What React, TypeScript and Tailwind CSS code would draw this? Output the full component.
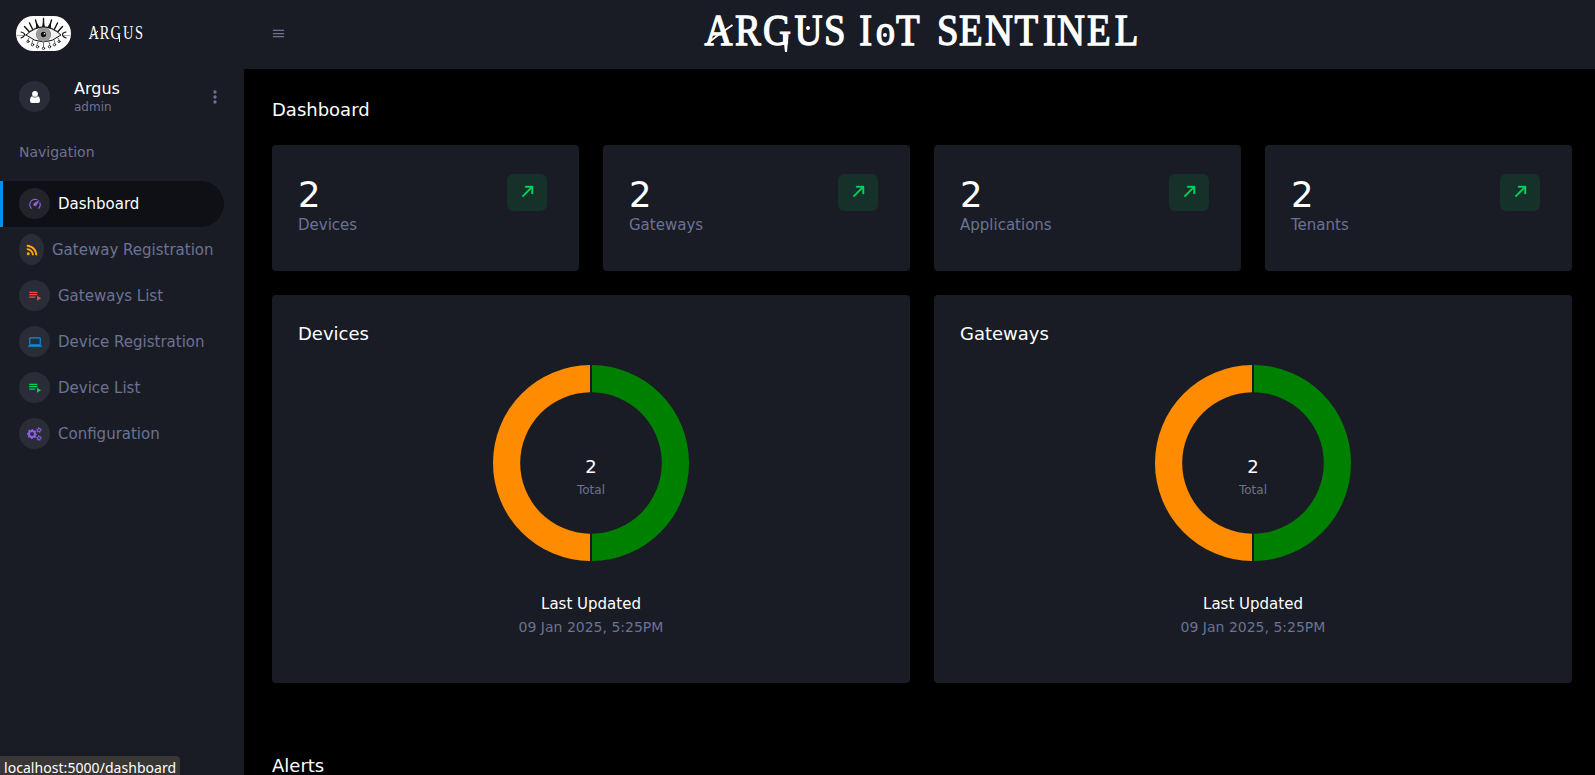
import React from "react";
import { FaRss } from "react-icons/fa";

const ICONS = {
  menu: "M3,6H21V8H3V6M3,11H21V13H3V11M3,16H21V18H3V16Z",
  dots: "M12,16A2,2 0 0,1 14,18A2,2 0 0,1 12,20A2,2 0 0,1 10,18A2,2 0 0,1 12,16M12,10A2,2 0 0,1 14,12A2,2 0 0,1 12,14A2,2 0 0,1 10,12A2,2 0 0,1 12,10M12,4A2,2 0 0,1 14,6A2,2 0 0,1 12,8A2,2 0 0,1 10,6A2,2 0 0,1 12,4Z",
  speedometer:
    "M12,16A3,3 0 0,1 9,13C9,11.88 9.61,10.9 10.5,10.39L20.21,4.77L14.68,14.35C14.18,15.33 13.17,16 12,16M12,3C13.81,3 15.5,3.5 16.97,4.32L14.87,5.53C14,5.19 13,5 12,5A8,8 0 0,0 4,13C4,15.21 4.89,17.21 6.34,18.65H6.35C6.74,19.04 6.74,19.67 6.35,20.06C5.96,20.45 5.32,20.45 4.93,20.07V20.07C3.12,18.26 2,15.76 2,13A10,10 0 0,1 12,3M22,13C22,15.76 20.88,18.26 19.07,20.07V20.07C18.68,20.45 18.05,20.45 17.66,20.06C17.27,19.67 17.27,19.04 17.66,18.65V18.65C19.11,17.2 20,15.21 20,13C20,12 19.81,11 19.46,10.1L20.67,8C21.5,9.5 22,11.18 22,13Z",
  playlist: "M16,8.500H2V10.700H16V8.500M16,4.500H2V6.700H16V4.500M2,15H12.500V12.800H2V15M15.500,11.500V20L22.500,15.700L15.500,11.500Z",
  laptop:
    "M4,6H20V16H4M20,18A2,2 0 0,0 22,16V6C22,4.89 21.1,4 20,4H4C2.89,4 2,4.89 2,6V16A2,2 0 0,0 4,18H0V20H24V18H20Z",
  arrow: "M5,17.59L15.59,7H9V5H19V15H17V8.41L6.41,19L5,17.59Z",
};

function Icon({ name, className }: { name: keyof typeof ICONS; className: string }) {
  return (
    <svg viewBox="0 0 24 24" fill="currentColor" className={className}>
      <path d={ICONS[name]} />
    </svg>
  );
}

function Cogs({ className }: { className: string }) {
  return (
    <svg viewBox="0 0 30 28" fill="none" stroke="currentColor" className={className}>
      <circle cx="10" cy="14" r="6" strokeWidth="4" />
      <circle cx="10" cy="14" r="8.800" strokeWidth="2.400" pathLength="16" strokeDasharray="1 1" strokeDashoffset=".5" />
      <circle cx="24" cy="6" r="3" strokeWidth="2" />
      <circle cx="24" cy="6" r="4.800" strokeWidth="2" pathLength="12" strokeDasharray="1 1" strokeDashoffset=".5" />
      <circle cx="24" cy="22" r="3" strokeWidth="2" />
      <circle cx="24" cy="22" r="4.800" strokeWidth="2" pathLength="12" strokeDasharray="1 1" strokeDashoffset=".5" />
    </svg>
  );
}

function EyeLogo() {
  return (
    <svg viewBox="0 0 55 35" className="h-[35px] w-[55px] shrink-0 rounded-full bg-white">
      <g stroke="#111" fill="none" strokeLinecap="round">
        <path d="M10 19Q27.500 3 45 19Q27.500 33 10 19Z" strokeWidth="1" fill="#f4f4f4" />
        <path d="M13 15.500Q27.500 5.500 42 15.500" strokeWidth=".6" />
        <path d="M1 19.500H7M48 19.500H54" strokeWidth=".7" stroke="#888" />
        <path d="M5 16Q9 17 8.500 19T5 22M50 16Q46 17 46.500 19T50 22" strokeWidth="1.1" />
        <path
          d="M27.500 2.500V10M19.500 4L21.500 11M35.500 4L33.500 11M13.500 7L16.500 13M41.500 7L38.500 13M8.500 10.500L13 15.500M46.500 10.500L42 15.500"
          strokeWidth="1.4"
        />
        <path
          d="M26.500 11L27.500 6L28.500 11ZM20.500 11.500L20.500 7L23 11ZM34.500 11.500L34.500 7L32 11Z"
          fill="#111"
          strokeWidth=".8"
        />
        <path
          d="M13 22L12 24M17 24L16 27M22 26L21 29M27.500 27V31M33 26L34 29M38 24L39 27M42 22L43 24"
          strokeWidth=".6"
        />
        <g strokeWidth=".8">
          <circle cx="12" cy="25.500" r="1.100" />
          <circle cx="16.500" cy="28.700" r="1.200" />
          <circle cx="21.500" cy="30.700" r="1.200" />
          <circle cx="27.500" cy="32.300" r="1.200" />
          <circle cx="33.500" cy="30.700" r="1.200" />
          <circle cx="38.500" cy="28.700" r="1.200" />
          <circle cx="43" cy="25.500" r="1.100" />
        </g>
      </g>
      <circle cx="27.500" cy="18.500" r="7" fill="#a5a5a5" stroke="#666" strokeWidth=".8" />
      <circle cx="27.500" cy="18.500" r="4.700" fill="none" stroke="#777" strokeWidth=".6" />
      <circle cx="27.500" cy="18.500" r="2.700" fill="#111" />
      <circle cx="28.500" cy="17.700" r=".8" fill="#fff" />
    </svg>
  );
}

function SmallWordmark() {
  return (
    <svg viewBox="0 0 58 24" className="h-6 w-[58px] text-white" fill="currentColor">
      <text
        transform="scale(.8 1)"
        x="1.800 16 29.400 45 60"
        y="17.500"
        className="font-['Liberation_Serif',serif] text-[18px]"
      >
        ARGUS
      </text>
      <path d="M2 17L11 9M32.500 13V20" fill="none" stroke="currentColor" strokeWidth="1" />
      <circle cx="41" cy="10.500" r=".7" />
    </svg>
  );
}

function Wordmark() {
  return (
    <svg viewBox="0 0 440 69" className="h-[69px] w-[440px] text-white" fill="currentColor">
      <text
        transform="scale(.86 1)"
        y="45"
        x="3 38.400 70.900 107.500 141.900 165 183 202 225.600 256 273.300 298.800 329 363.400 396.500 412.800 447.700 480"
        stroke="currentColor"
        strokeWidth="1.3"
        className="font-['Liberation_Serif',serif] text-[45px]"
      >
        {"ARGUS IoT SENTINEL"}
      </text>
      <path d="M4 44.500Q17 34 30.500 25" fill="none" stroke="currentColor" strokeWidth="1.8" />
      <path d="M81 35H86.500L85 52H83Z" />
      <circle cx="106" cy="28" r="2" />
      <circle cx="183" cy="35" r="2" />
    </svg>
  );
}

type NavItem = { label: string; icon: React.ReactNode; active?: boolean; narrow?: boolean };

const NAV: NavItem[] = [
  { label: "Dashboard", icon: <Icon name="speedometer" className="size-[14px] text-[#8f5fe8]" />, active: true },
  { label: "Gateway Registration", icon: <FaRss className="size-[12px] text-[#ffab00]" />, narrow: true },
  { label: "Gateways List", icon: <Icon name="playlist" className="size-[14px] text-[#fc424a]" /> },
  { label: "Device Registration", icon: <Icon name="laptop" className="size-[14px] text-[#0090e7]" /> },
  { label: "Device List", icon: <Icon name="playlist" className="size-[14px] text-[#00d25b]" /> },
  { label: "Configuration", icon: <Cogs className="h-[14px] w-[15px] text-[#8f5fe8]" /> },
];

function Sidebar() {
  return (
    <aside className="flex w-[244px] shrink-0 flex-col bg-[#191c24]">
      <div className="flex h-[67px] shrink-0 items-center pl-4">
        <EyeLogo />
        <div className="pl-4">
          <SmallWordmark />
        </div>
      </div>
      <div className="flex h-[59px] shrink-0 items-center pr-[19px] pl-[19px]">
        <div className="flex size-[31px] items-center justify-center rounded-full bg-[#2a2c37]">
          <svg viewBox="0 0 10 12" className="mt-px h-3 w-[10px]" fill="#fff">
            <circle cx="5" cy="2.900" r="2.900" />
            <path d="M2 5.200Q5 7.600 8 5.200Q10 6 10 9.700Q10 12 8 12H2Q0 12 0 9.700Q0 6 2 5.200Z" />
          </svg>
        </div>
        <div className="flex flex-1 flex-col pt-0.5 pl-6">
          <span className="text-base leading-[18px] text-white">Argus</span>
          <span className="text-xs leading-[18px]">admin</span>
        </div>
        <Icon name="dots" className="size-5" />
      </div>
      <div className="flex h-[55px] shrink-0 items-center pb-[3px] pl-[19px] text-sm">Navigation</div>
      <nav className="flex flex-col">
        {NAV.map((item) => (
          <a
            key={item.label}
            className={
              item.active
                ? "flex h-[46px] w-[224px] items-center gap-2 rounded-r-full border-l-[3px] border-[#0090e7] bg-[#0f1015] pl-4 text-[15px] whitespace-nowrap text-white"
                : "flex h-[46px] w-[224px] items-center gap-2 border-l-[3px] border-transparent pl-4 text-[15px] whitespace-nowrap"
            }
          >
            <span
              className={
                item.narrow
                  ? "mb-px flex h-[31px] w-[25px] shrink-0 items-center justify-center rounded-[50%] bg-[#2a2c37]"
                  : item.active
                    ? "mb-px flex size-[31px] shrink-0 items-center justify-center rounded-full bg-[#22232b]"
                    : "mb-px flex size-[31px] shrink-0 items-center justify-center rounded-full bg-[#2a2c37]"
              }
            >
              {item.icon}
            </span>
            {item.label}
          </a>
        ))}
      </nav>
    </aside>
  );
}

function StatCard({ value, label }: { value: number; label: string }) {
  return (
    <div className="flex h-[126px] items-start justify-between rounded bg-[#191c24] pt-[29px] pr-8 pl-[26px]">
      <div className="flex flex-col">
        <span className="pt-px text-[35.500px] leading-10 text-white">{value}</span>
        <span className="text-[15px] leading-5">{label}</span>
      </div>
      <div className="flex h-[37px] w-10 justify-center rounded-md bg-[#16302a] pt-2">
        <Icon name="arrow" className="size-[19px] stroke-[#00d25b] stroke-[0.5] text-[#00d25b]" />
      </div>
    </div>
  );
}

function DonutCard({ title, total }: { title: string; total: number }) {
  return (
    <div className="flex h-[388px] flex-col rounded bg-[#191c24] px-[26px] pt-[26px]">
      <h3 className="text-lg leading-[26px] text-white">{title}</h3>
      <svg viewBox="0 0 200 200" className="mt-4 size-[200px] self-center">
        <path d="M101 2.005A98 98 0 0 1 101 197.995V170.793A70.800 70.800 0 0 0 101 29.207Z" fill="#008000" />
        <path d="M99 2.005A98 98 0 0 0 99 197.995V170.793A70.800 70.800 0 0 1 99 29.207Z" fill="#ff8c00" />
        <text x="100" y="110" textAnchor="middle" fill="#fff" fontSize="18">
          {total}
        </text>
        <text x="100" y="131" textAnchor="middle" fill="#6c7293" fontSize="12">
          Total
        </text>
      </svg>
      <div className="mt-[29px] flex flex-col items-center">
        <span className="text-[15px] leading-6 text-white">Last Updated</span>
        <span className="text-sm leading-[23px]">09 Jan 2025, 5:25PM</span>
      </div>
    </div>
  );
}

export default function App() {
  return (
    <div className="relative flex h-[775px] w-[1595px] overflow-hidden bg-black font-['DejaVu_Sans',sans-serif] text-[#6c7293]">
      <Sidebar />
      <div className="flex min-w-0 flex-1 flex-col">
        <header className="flex h-[69px] shrink-0 items-center bg-[#191c24] pl-[27px]">
          <Icon name="menu" className="mb-0.5 size-[15px]" />
          <div className="ml-[416px]">
            <Wordmark />
          </div>
        </header>
        <main className="flex flex-col pr-[23px] pl-7">
          <h3 className="flex h-[76px] items-center pt-1.5 text-lg text-white">Dashboard</h3>
          <div className="grid grid-cols-4 gap-6">
            <StatCard value={2} label="Devices" />
            <StatCard value={2} label="Gateways" />
            <StatCard value={2} label="Applications" />
            <StatCard value={2} label="Tenants" />
          </div>
          <div className="mt-6 grid grid-cols-2 gap-6">
            <DonutCard title="Devices" total={2} />
            <DonutCard title="Gateways" total={2} />
          </div>
          <h3 className="mt-[70px] text-lg leading-[26px] whitespace-nowrap text-white">Alerts</h3>
        </main>
      </div>
      <div className="absolute bottom-0 left-0 h-[19px] w-[180px] rounded-tr bg-[#383735] pl-1 font-['Noto_Sans',sans-serif] text-[14px] leading-[23px] tracking-[0.050px] whitespace-nowrap text-white">
        localhost:5000/dashboard
      </div>
    </div>
  );
}
